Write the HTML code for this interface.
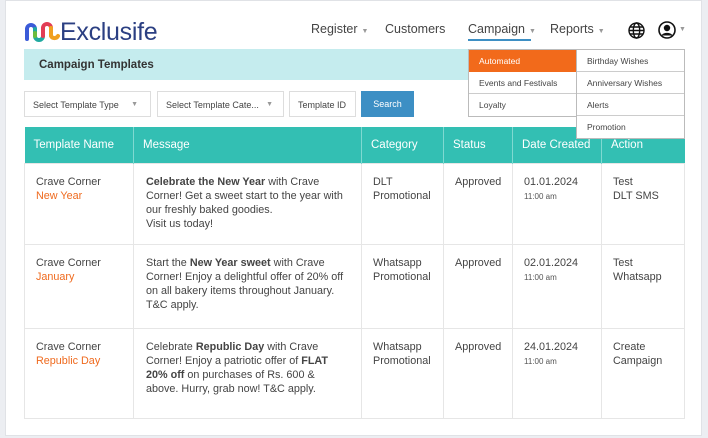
<!DOCTYPE html>
<html><head><meta charset="utf-8"><style>
*{margin:0;padding:0;box-sizing:border-box}
body{width:708px;height:438px;background:#eceef2;font-family:"Liberation Sans",sans-serif;position:relative;overflow:hidden;color:#333}
.card{position:absolute;left:5px;top:0;width:697px;height:436px;background:#fff;border:1px solid #e0e2e6}
.a{position:absolute}
.nav{font-size:12.5px;color:#444;top:22px}
.car{font-size:7px;color:#999;margin-left:4px}
.banner{left:24px;top:49px;width:660px;height:31px;background:#c5ecee;font-weight:bold;font-size:11.5px;color:#333;padding:10px 0 0 15px}
.sel{top:91px;height:26px;border:1px solid #ddd;font-size:9px;color:#444;padding:8px 0 0 8px;background:#fff}
.btn{left:361px;top:91px;width:53px;height:26px;background:#3d8fc4;color:#fff;font-size:9px;text-align:center;padding-top:8px}
.dd{background:#fff;border:1px solid #bbb;font-size:8.5px;color:#444;z-index:5}
.dd div{height:22px;padding:6px 0 0 10px;border-bottom:1px solid #ccc}
.dd div:last-child{border-bottom:none}
table{position:absolute;left:24px;top:127px;width:660px;border-collapse:collapse;font-size:10.8px;color:#444;table-layout:fixed}
th{background:#33bfb3;color:#fff;font-weight:normal;text-align:left;height:36px;padding:0 9px;border-left:1px solid #7fd9d1;font-size:11.5px;white-space:nowrap}
th:first-child{border-left:none}
td{vertical-align:top;padding:11px 10px 0 11px;border:1px solid #e6e6e6;line-height:14px}
td.m{padding-left:12px;padding-right:14px}
.o{color:#ef6a1e}
.t{font-size:8px;color:#555}
</style></head><body>
<div class="card"></div>
<svg class="a" style="left:24px;top:19px" width="36" height="28" viewBox="0 0 36 28" fill="none" stroke-width="4" stroke-linecap="round">
<path d="M3 20 V10 a4 4 0 0 1 8 0" stroke="#3b5bd8"/>
<path d="M11 10 V17 a4 4 0 0 0 8 0" stroke="#1fa9a0"/>
<path d="M19 17 V9 a4 4 0 0 1 8 0" stroke="#e23d55"/>
<path d="M27 9 V17 a4 4 0 0 0 7 0" stroke="#f0a020"/>
<path d="M11 14 V17" stroke="#6bbb3c"/>
</svg>
<div class="a" style="left:60px;top:18px;font-size:25px;color:#2b3f82;letter-spacing:-0.3px">Exclusife</div>
<div class="a nav" style="left:311px">Register<span class="car">▼</span></div>
<div class="a nav" style="left:385px">Customers</div>
<div class="a nav" style="left:468px">Campaign<span class="car">▼</span></div>
<div class="a" style="left:468px;top:39px;width:63px;height:2px;background:#3d8fc4"></div>
<div class="a nav" style="left:550px">Reports<span class="car">▼</span></div>
<svg class="a" style="left:628px;top:22px" width="17" height="17" viewBox="0 0 17 17" fill="none" stroke="#111" stroke-width="1.4"><circle cx="8.5" cy="8.5" r="7.5"/><ellipse cx="8.5" cy="8.5" rx="3.2" ry="7.5"/><path d="M1 8.5h15M2 5h13M2 12h13"/></svg>
<svg class="a" style="left:658px;top:21px" width="18" height="18" viewBox="0 0 18 18"><circle cx="9" cy="9" r="8" fill="#fff" stroke="#111" stroke-width="1.6"/><circle cx="9" cy="7" r="3.2" fill="#111"/><path d="M3.5 14.5c1.5-3.5 9.5-3.5 11 0" fill="#111"/></svg>
<div class="a car" style="left:675px;top:26px">▼</div>
<div class="a banner">Campaign Templates</div>
<div class="a sel" style="left:24px;width:127px">Select Template Type<span class="car" style="position:absolute;right:12px;top:9px">▼</span></div>
<div class="a sel" style="left:157px;width:127px">Select Template Cate...<span class="car" style="position:absolute;right:10px;top:9px">▼</span></div>
<div class="a sel" style="left:289px;width:67px">Template ID</div>
<div class="a btn">Search</div>
<table>
<colgroup><col style="width:109px"><col style="width:228px"><col style="width:82px"><col style="width:69px"><col style="width:89px"><col style="width:83px"></colgroup>
<tr><th>Template Name</th><th>Message</th><th>Category</th><th>Status</th><th>Date Created</th><th>Action</th></tr>
<tr style="height:81px"><td>Crave Corner<br><span class="o">New Year</span></td><td class="m"><b>Celebrate the New Year</b> with Crave Corner! Get a sweet start to the year with our freshly baked goodies.<br>Visit us today!</td><td>DLT Promotional</td><td>Approved</td><td>01.01.2024<br><span class="t">11:00 am</span></td><td>Test<br>DLT SMS</td></tr>
<tr style="height:84px"><td>Crave Corner<br><span class="o">January</span></td><td class="m">Start the <b>New Year sweet</b> with Crave Corner! Enjoy a delightful offer of 20% off on all bakery items throughout January. T&amp;C apply.</td><td>Whatsapp Promotional</td><td>Approved</td><td>02.01.2024<br><span class="t">11:00 am</span></td><td>Test<br>Whatsapp</td></tr>
<tr style="height:90px"><td>Crave Corner<br><span class="o">Republic Day</span></td><td class="m">Celebrate <b>Republic Day</b> with Crave Corner! Enjoy a patriotic offer of <b>FLAT 20% off</b> on purchases of Rs. 600 &amp; above. Hurry, grab now! T&amp;C apply.</td><td>Whatsapp Promotional</td><td>Approved</td><td>24.01.2024<br><span class="t">11:00 am</span></td><td>Create Campaign</td></tr>
</table>
<div class="a dd" style="left:468px;top:49px;width:109px">
<div style="background:#f26a1b;color:#fff;border-bottom:none">Automated</div><div>Events and Festivals</div><div>Loyalty</div></div>
<div class="a dd" style="left:576px;top:49px;width:109px">
<div>Birthday Wishes</div><div>Anniversary Wishes</div><div>Alerts</div><div>Promotion</div></div>
</body></html>
